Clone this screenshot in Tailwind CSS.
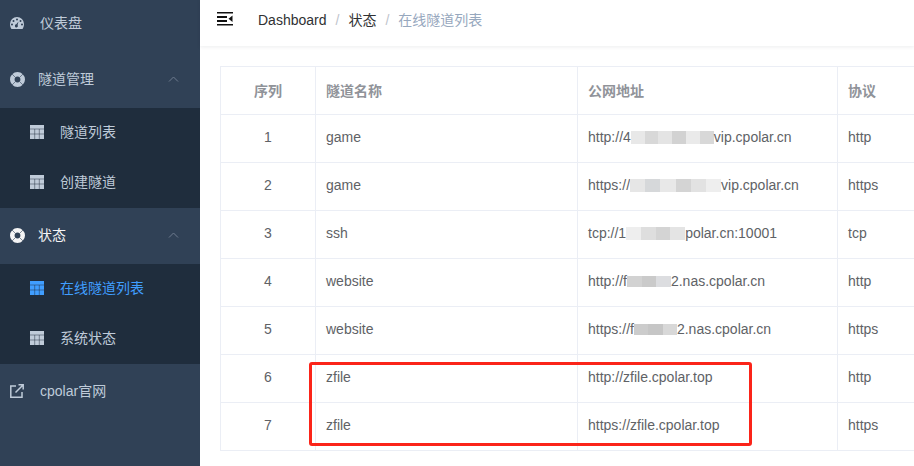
<!DOCTYPE html>
<html lang="en">

<head>
  <meta charset="UTF-8">
  <title>cpolar</title>
  <script src="https://cdn.jsdelivr.net/npm/@tailwindcss/browser@4"></script>
</head>

<body class="bg-white font-['Liberation_Sans','Noto_Sans_CJK_SC',sans-serif]">
  <div class="relative flex h-[466px] w-[914px] overflow-hidden">

    <!-- Sidebar -->
    <aside class="w-[200px] shrink-0 overflow-hidden bg-[#304156] text-sm text-[#bfcbd9]">
      <div class="-mt-[4px]">
        <a class="flex h-[56px] items-center pb-[2px] pl-[10px]">
          <svg class="w-[14px] h-[12px] mr-[16px]" viewBox="0 0 14 12"><path fill="#bfcbd9" fill-rule="evenodd" d="M7 0a7 7 0 0 1 7 7c0 2-.6 3.600-1.500 5h-11C.6 10.600 0 9 0 7a7 7 0 0 1 7-7zM7 1.500a1 1 0 1 0 0 2 1 1 0 0 0 0-2zM3.500 3a1 1 0 1 0 0 2 1 1 0 0 0 0-2zM10.500 3a1 1 0 1 0 0 2 1 1 0 0 0 0-2zM2 6.500a1 1 0 1 0 0 2 1 1 0 0 0 0-2zM12 6.500a1 1 0 1 0 0 2 1 1 0 0 0 0-2zM8.500 4.500 6.300 7.300a1.500 1.500 0 1 0 1.300.6z"/></svg>
          <span>仪表盘</span>
        </a>
        <a class="flex h-[56px] items-center pb-[2px] pl-[10px]">
          <svg class="w-[15px] h-[15px] mr-[13px]" viewBox="0 0 15 15"><circle cx="7.500" cy="7.500" r="5.200" fill="none" stroke="#bfcbd9" stroke-width="4.600"/><path stroke="#304156" stroke-width=".6" d="M2 2l3 3M13 2l-3 3M2 13l3-3M13 13l-3-3"/></svg>
          <span>隧道管理</span>
          <svg class="ml-auto mr-[21px] w-[11px] h-[6px]" viewBox="0 0 11 6"><path fill="none" stroke="#6f7d8f" d="M1 5.500 5.500 1 10 5.500"/></svg>
        </a>
        <div class="bg-[#1f2d3d]">
          <a class="flex h-[50px] items-center pb-[2px] pl-[30px]">
            <svg class="w-[14px] h-[14px] mr-[16px]" viewBox="0 0 14 14"><path fill="#bfcbd9" d="M0 0h14v14H0z"/><path fill="none" stroke="#1f2d3d" stroke-opacity=".6" stroke-width=".8" d="M0 4h14M0 9h14M4.700 4v10M9.300 4v10"/></svg>
            <span>隧道列表</span>
          </a>
          <a class="flex h-[50px] items-center pb-[2px] pl-[30px]">
            <svg class="w-[14px] h-[14px] mr-[16px]" viewBox="0 0 14 14"><path fill="#bfcbd9" d="M0 0h14v14H0z"/><path fill="none" stroke="#1f2d3d" stroke-opacity=".6" stroke-width=".8" d="M0 4h14M0 9h14M4.700 4v10M9.300 4v10"/></svg>
            <span>创建隧道</span>
          </a>
        </div>
        <a class="flex h-[56px] items-center pb-[2px] pl-[10px] text-[#f4f4f5]">
          <svg class="w-[15px] h-[15px] mr-[13px]" viewBox="0 0 15 15"><circle cx="7.500" cy="7.500" r="5.200" fill="none" stroke="#f4f4f5" stroke-width="4.600"/><path stroke="#304156" stroke-width=".6" d="M2 2l3 3M13 2l-3 3M2 13l3-3M13 13l-3-3"/></svg>
          <span>状态</span>
          <svg class="ml-auto mr-[21px] w-[11px] h-[6px]" viewBox="0 0 11 6"><path fill="none" stroke="#6f7d8f" d="M1 5.500 5.500 1 10 5.500"/></svg>
        </a>
        <div class="bg-[#1f2d3d]">
          <a class="flex h-[50px] items-center pb-[2px] pl-[30px] text-[#409eff]">
            <svg class="w-[14px] h-[14px] mr-[16px]" viewBox="0 0 14 14"><path fill="#409eff" d="M0 0h14v14H0z"/><path fill="none" stroke="#1f2d3d" stroke-opacity=".6" stroke-width=".8" d="M0 4h14M0 9h14M4.700 4v10M9.300 4v10"/></svg>
            <span>在线隧道列表</span>
          </a>
          <a class="flex h-[50px] items-center pb-[2px] pl-[30px]">
            <svg class="w-[14px] h-[14px] mr-[16px]" viewBox="0 0 14 14"><path fill="#bfcbd9" d="M0 0h14v14H0z"/><path fill="none" stroke="#1f2d3d" stroke-opacity=".6" stroke-width=".8" d="M0 4h14M0 9h14M4.700 4v10M9.300 4v10"/></svg>
            <span>系统状态</span>
          </a>
        </div>
        <a class="flex h-[56px] items-center pb-[2px] pl-[10px]">
          <svg class="w-[14px] h-[14px] mr-[16px]" viewBox="0 0 14 14"><path fill="none" stroke="#bfcbd9" stroke-width="1.500" d="M6 2H.8v11.200H12V8M5.500 8.500 13 1M8.500.8h4.700v4.700"/></svg>
          <span>cpolar官网</span>
        </a>
      </div>
    </aside>

    <!-- Main -->
    <main class="min-w-0 flex-1">
      <header class="flex h-[46px] items-center pb-[6px] shadow-[0_1px_4px_rgba(0,21,41,0.08)] text-sm">
        <svg class="ml-[17px] mr-[25px] w-[16px] h-[14px] -mt-[3px]" viewBox="0 0 16 14"><path fill="#111" d="M0 0h16v1.500H0zM0 4h10v2H0zM0 8h10v2H0zM0 12h16v1.500H0zM15.500 3.500v6.500L11.500 6.800z"/></svg>
        <span class="text-[#303133]">Dashboard</span>
        <span class="mx-[9px] text-[#c0c4cc]">/</span>
        <span class="text-[#303133]">状态</span>
        <span class="mx-[9px] text-[#c0c4cc]">/</span>
        <span class="text-[#97a8be]">在线隧道列表</span>
      </header>

      <div class="pl-[20px] pt-[20px]">
        <table class="w-[720px] table-fixed border-collapse text-sm text-[#606266]">
          <colgroup>
            <col class="w-[95px]">
            <col class="w-[262px]">
            <col class="w-[260px]">
            <col class="w-[103px]">
          </colgroup>
          <thead>
            <tr class="h-[48px] font-bold text-[#909399]">
              <th class="border border-[#ebeef5] text-center">序列</th>
              <th class="border border-[#ebeef5] pl-[10px] text-left">隧道名称</th>
              <th class="border border-[#ebeef5] pl-[10px] text-left">公网地址</th>
              <th class="border border-[#ebeef5] pl-[10px] text-left">协议</th>
            </tr>
          </thead>
          <tbody>
            <tr class="h-[48px]">
              <td class="border border-[#ebeef5] pb-[4px] text-center">1</td>
              <td class="border border-[#ebeef5] pb-[4px] pl-[10px]">game</td>
              <td class="border border-[#ebeef5] pb-[4px] pl-[10px]">http://4<span class="inline-flex h-[13px] w-[83px] align-[-2px]"><i class="w-1/6 bg-[#e8e8e8]"></i><i class="w-1/6 bg-[#d8d8d8]"></i><i class="w-1/6 bg-[#e4e4e4]"></i><i class="w-1/6 bg-[#d2d2d2]"></i><i class="w-1/6 bg-[#eaeaea]"></i><i class="w-1/6 bg-[#d8d8d8]"></i></span>vip.cpolar.cn</td>
              <td class="border border-[#ebeef5] pb-[4px] pl-[10px]">http</td>
            </tr>
            <tr class="h-[48px]">
              <td class="border border-[#ebeef5] pb-[4px] text-center">2</td>
              <td class="border border-[#ebeef5] pb-[4px] pl-[10px]">game</td>
              <td class="border border-[#ebeef5] pb-[4px] pl-[10px]">https://<span class="inline-flex h-[13px] w-[91px] align-[-2px]"><i class="w-1/6 bg-[#e6e6e6]"></i><i class="w-1/6 bg-[#d6d8da]"></i><i class="w-1/6 bg-[#e8e8e8]"></i><i class="w-1/6 bg-[#d4d4d4]"></i><i class="w-1/6 bg-[#e2e2e2]"></i><i class="w-1/6 bg-[#eeeeee]"></i></span>vip.cpolar.cn</td>
              <td class="border border-[#ebeef5] pb-[4px] pl-[10px]">https</td>
            </tr>
            <tr class="h-[48px]">
              <td class="border border-[#ebeef5] pb-[4px] text-center">3</td>
              <td class="border border-[#ebeef5] pb-[4px] pl-[10px]">ssh</td>
              <td class="border border-[#ebeef5] pb-[4px] pl-[10px]">tcp://1<span class="inline-flex h-[13px] w-[59px] align-[-2px]"><i class="w-1/4 bg-[#eeeeee]"></i><i class="w-1/4 bg-[#dedede]"></i><i class="w-1/4 bg-[#d4d4d4]"></i><i class="w-1/4 bg-[#e4e4e4]"></i></span>polar.cn:10001</td>
              <td class="border border-[#ebeef5] pb-[4px] pl-[10px]">tcp</td>
            </tr>
            <tr class="h-[48px]">
              <td class="border border-[#ebeef5] pb-[4px] text-center">4</td>
              <td class="border border-[#ebeef5] pb-[4px] pl-[10px]">website</td>
              <td class="border border-[#ebeef5] pb-[4px] pl-[10px]">http://f<span class="inline-flex h-[11px] w-[44px] align-[-1px]"><i class="w-1/3 bg-[#d2d2d2]"></i><i class="w-1/3 bg-[#cacaca]"></i><i class="w-1/3 bg-[#dcdde0]"></i></span>2.nas.cpolar.cn</td>
              <td class="border border-[#ebeef5] pb-[4px] pl-[10px]">http</td>
            </tr>
            <tr class="h-[48px]">
              <td class="border border-[#ebeef5] pb-[4px] text-center">5</td>
              <td class="border border-[#ebeef5] pb-[4px] pl-[10px]">website</td>
              <td class="border border-[#ebeef5] pb-[4px] pl-[10px]">https://f<span class="inline-flex h-[11px] w-[43px] align-[-1px]"><i class="w-1/3 bg-[#cccccc]"></i><i class="w-1/3 bg-[#c6c6c6]"></i><i class="w-1/3 bg-[#d8d8d8]"></i></span>2.nas.cpolar.cn</td>
              <td class="border border-[#ebeef5] pb-[4px] pl-[10px]">https</td>
            </tr>
            <tr class="h-[48px]">
              <td class="border border-[#ebeef5] pb-[4px] text-center">6</td>
              <td class="border border-[#ebeef5] pb-[4px] pl-[10px]">zfile</td>
              <td class="border border-[#ebeef5] pb-[4px] pl-[10px]">http://zfile.cpolar.top</td>
              <td class="border border-[#ebeef5] pb-[4px] pl-[10px]">http</td>
            </tr>
            <tr class="h-[48px]">
              <td class="border border-[#ebeef5] pb-[4px] text-center">7</td>
              <td class="border border-[#ebeef5] pb-[4px] pl-[10px]">zfile</td>
              <td class="border border-[#ebeef5] pb-[4px] pl-[10px]">https://zfile.cpolar.top</td>
              <td class="border border-[#ebeef5] pb-[4px] pl-[10px]">https</td>
            </tr>
          </tbody>
        </table>
      </div>
    </main>

    <!-- Red annotation drawn over the screenshot -->
    <div class="absolute left-[309px] top-[362px] h-[84px] w-[443px] rounded-[3px] border-[3px] border-[#fb2419]"></div>
  </div>
</body>

</html>
